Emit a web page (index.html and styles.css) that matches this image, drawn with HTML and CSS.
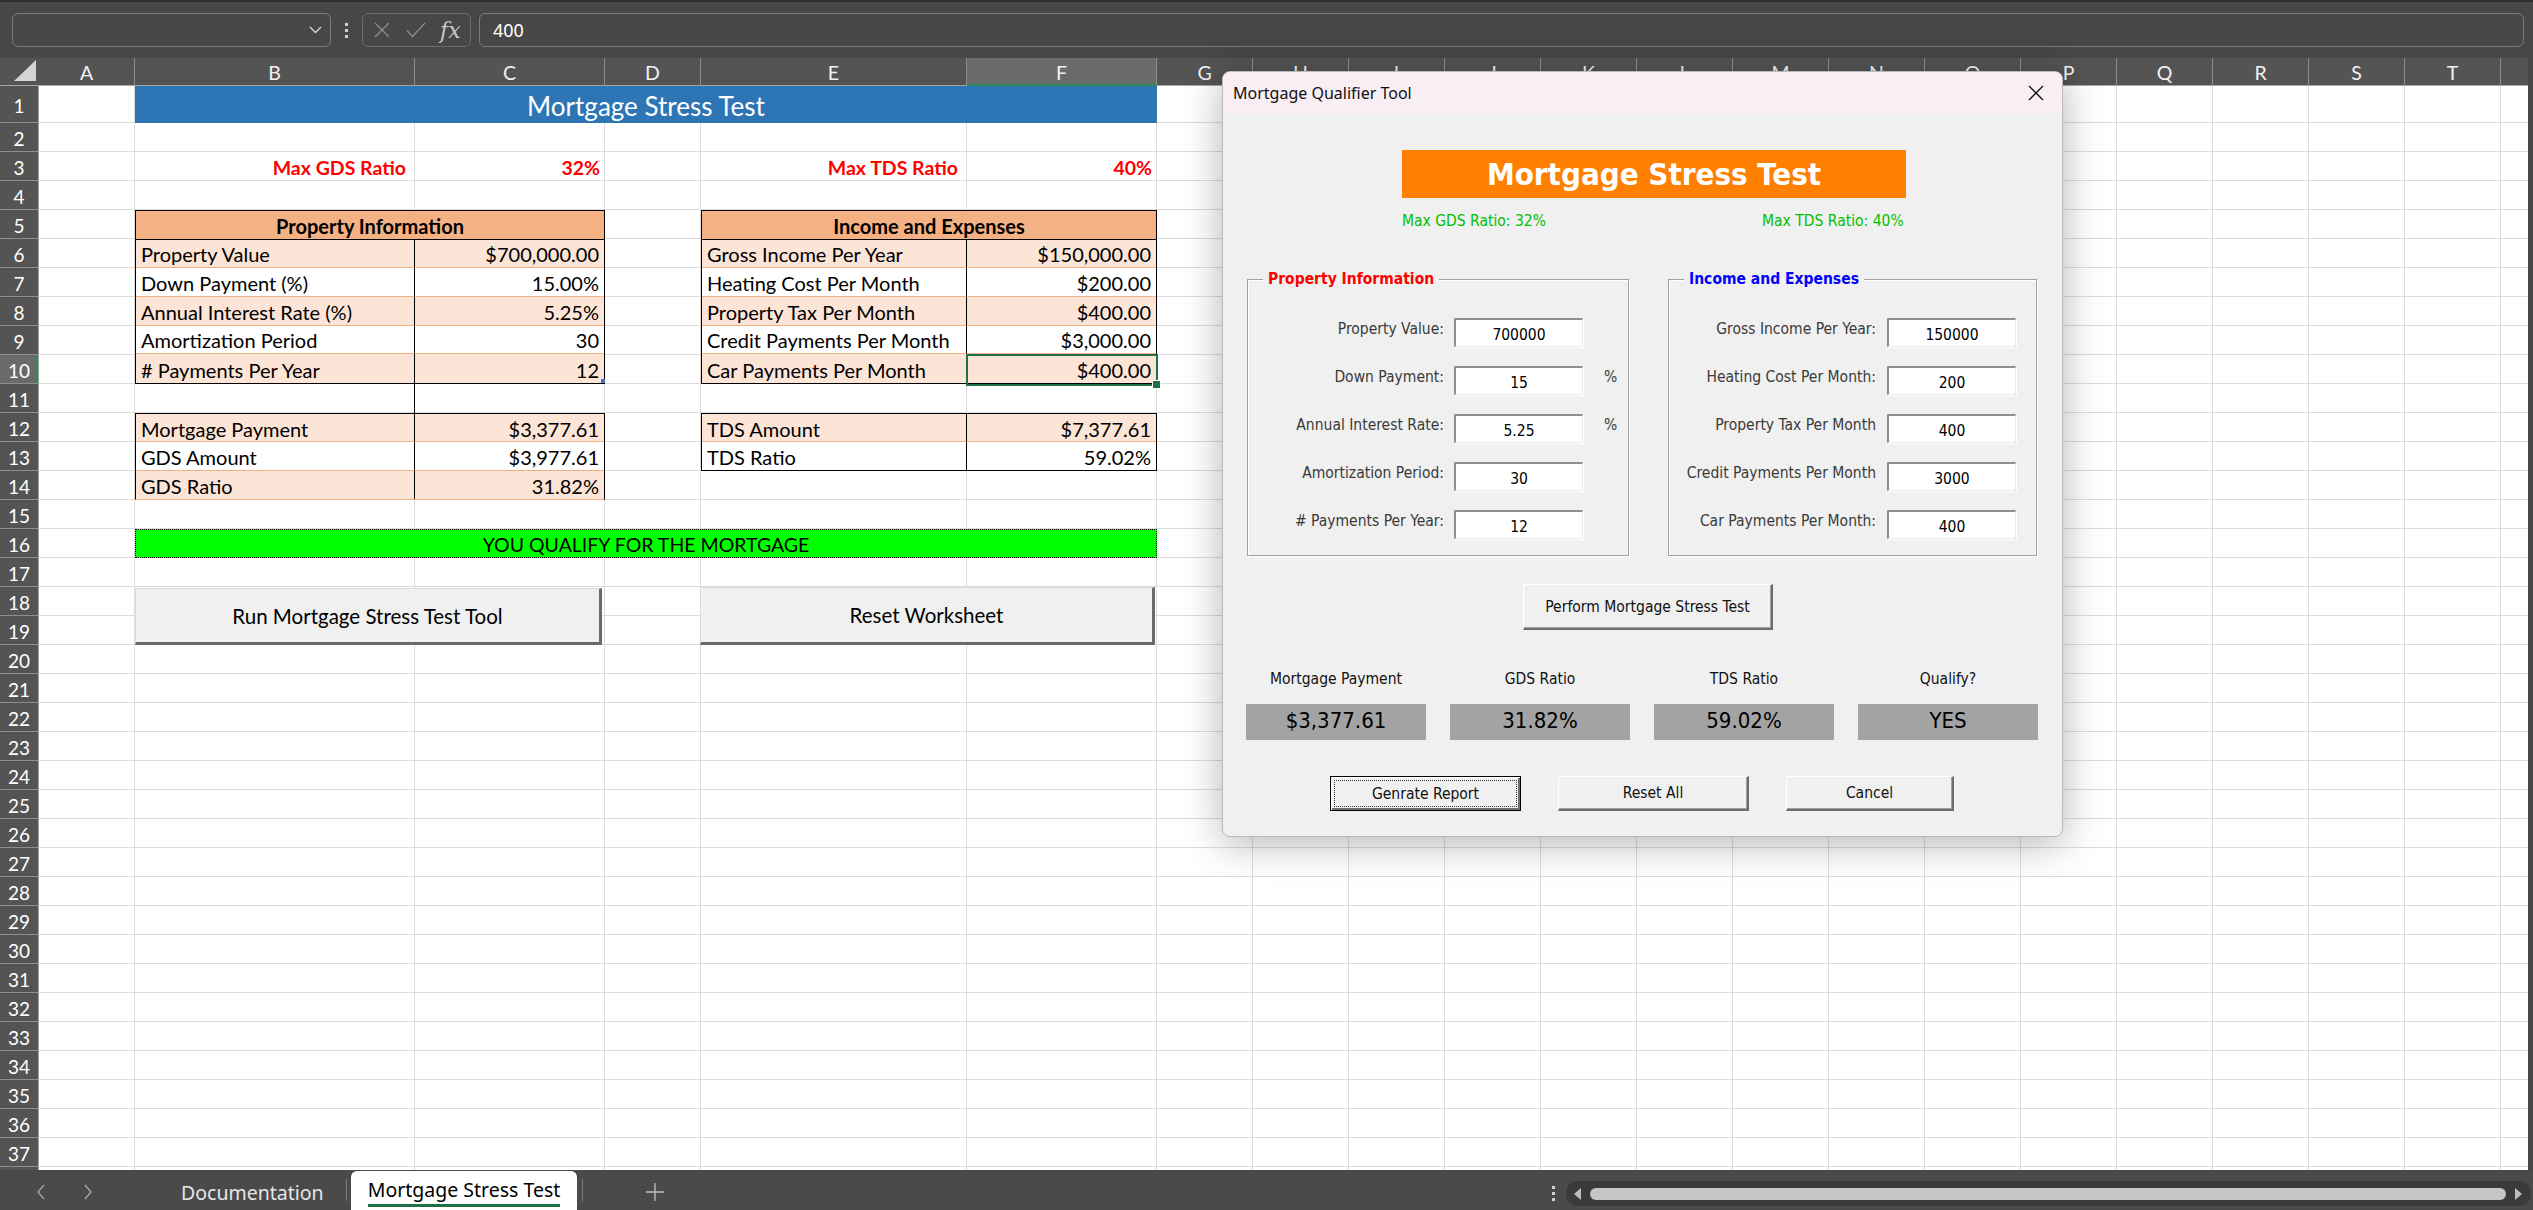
FILE: index.html
```html
<!DOCTYPE html>
<html>
<head>
<meta charset="utf-8">
<title>Mortgage Stress Test</title>
<link rel="stylesheet" href="styles.css">
</head>
<body>
<div class="app">
  <div class="fbar">
    <div class="namebox"><svg width="13" height="8" viewBox="0 0 13 8"><polyline points="1,1 6.5,6.5 12,1" fill="none" stroke="#d6d6d6" stroke-width="1.4"/></svg></div>
    <div class="grip"><i></i><i></i><i></i></div>
    <div class="fxbox">
      <svg class="ic-x" width="16" height="16" viewBox="0 0 16 16"><path d="M1 1 L15 15 M15 1 L1 15" stroke="#8d8d8d" stroke-width="1.3" fill="none"/></svg>
      <svg class="ic-ok" width="20" height="16" viewBox="0 0 20 16"><path d="M1 8.5 L6.5 14.5 L19 1" stroke="#8d8d8d" stroke-width="1.3" fill="none"/></svg>
      <span class="fx">fx</span>
    </div>
    <div class="finput">400</div>
  </div>

  <div class="sheet">
    <div class="corner"><svg width="22" height="21" viewBox="0 0 22 21"><polygon points="0,21 22,21 22,0" fill="#d4d4d4"/></svg></div>
    <div class="ch">A</div><div class="ch">B</div><div class="ch">C</div><div class="ch">D</div><div class="ch">E</div><div class="ch hsel">F</div><div class="ch">G</div><div class="ch">H</div><div class="ch">I</div><div class="ch">J</div><div class="ch">K</div><div class="ch">L</div><div class="ch">M</div><div class="ch">N</div><div class="ch">O</div><div class="ch">P</div><div class="ch">Q</div><div class="ch">R</div><div class="ch">S</div><div class="ch">T</div><div class="ch last"></div>

    <div class="rowhdr">
      <div class="rh">1</div><div class="rh">2</div><div class="rh">3</div><div class="rh">4</div><div class="rh">5</div><div class="rh">6</div><div class="rh">7</div><div class="rh">8</div><div class="rh">9</div><div class="rh rsel">10</div>
      <div class="rh">11</div><div class="rh">12</div><div class="rh">13</div><div class="rh">14</div><div class="rh">15</div><div class="rh">16</div><div class="rh">17</div><div class="rh">18</div><div class="rh">19</div><div class="rh">20</div>
      <div class="rh">21</div><div class="rh">22</div><div class="rh">23</div><div class="rh">24</div><div class="rh">25</div><div class="rh">26</div><div class="rh">27</div><div class="rh">28</div><div class="rh">29</div><div class="rh">30</div>
      <div class="rh">31</div><div class="rh">32</div><div class="rh">33</div><div class="rh">34</div><div class="rh">35</div><div class="rh">36</div><div class="rh">37</div><div class="rh"></div>
    </div>

    <div class="cells"></div>

    <div class="title">Mortgage Stress Test</div>

    <div class="lim limB">Max GDS Ratio</div>
    <div class="lim limC">32%</div>
    <div class="lim limE">Max TDS Ratio</div>
    <div class="lim limF">40%</div>

    <div class="tbl tblB prop">
      <div class="tc hdr">Property Information</div>
      <div class="tc k fill">Property Value</div><div class="tc v fill">$700,000.00</div>
      <div class="tc k">Down Payment (%)</div><div class="tc v">15.00%</div>
      <div class="tc k fill">Annual Interest Rate (%)</div><div class="tc v fill">5.25%</div>
      <div class="tc k">Amortization Period</div><div class="tc v">30</div>
      <div class="tc k fill last">&#35; Payments Per Year</div><div class="tc v fill last mark">12</div>
    </div>

    <div class="tbl tblE inc">
      <div class="tc hdr">Income and Expenses</div>
      <div class="tc k fill">Gross Income Per Year</div><div class="tc v fill">$150,000.00</div>
      <div class="tc k">Heating Cost Per Month</div><div class="tc v">$200.00</div>
      <div class="tc k fill">Property Tax Per Month</div><div class="tc v fill">$400.00</div>
      <div class="tc k">Credit Payments Per Month</div><div class="tc v">$3,000.00</div>
      <div class="tc k fill last">Car Payments Per Month</div><div class="tc v fill last">$400.00</div>
    </div>

    <div class="divider11"></div>

    <div class="tbl tblB res">
      <div class="tc k fill">Mortgage Payment</div><div class="tc v fill">$3,377.61</div>
      <div class="tc k">GDS Amount</div><div class="tc v">$3,977.61</div>
      <div class="tc k fill last">GDS Ratio</div><div class="tc v fill last">31.82%</div>
    </div>

    <div class="tbl tblE tds">
      <div class="tc k fill">TDS Amount</div><div class="tc v fill">$7,377.61</div>
      <div class="tc k last">TDS Ratio</div><div class="tc v last">59.02%</div>
    </div>

    <div class="selcell"></div>

    <div class="qualify">YOU QUALIFY FOR THE MORTGAGE</div>

    <div class="xbtn runbtn">Run Mortgage Stress Test Tool</div>
    <div class="xbtn resetbtn">Reset Worksheet</div>
  </div>

  <div class="tabbar">
    <div class="tabnav">
      <svg width="10" height="16" viewBox="0 0 10 16"><polyline points="8,1 2,8 8,15" fill="none" stroke="#a8a8a8" stroke-width="1.3"/></svg>
      <svg width="10" height="16" viewBox="0 0 10 16"><polyline points="2,1 8,8 2,15" fill="none" stroke="#a8a8a8" stroke-width="1.3"/></svg>
    </div>
    <div class="tab doc">Documentation</div>
    <div class="tsep"></div>
    <div class="tab active"><span>Mortgage Stress Test</span></div>
    <div class="tsep"></div>
    <div class="plus"><svg width="18" height="18" viewBox="0 0 18 18"><path d="M9 0 V18 M0 9 H18" stroke="#bdbdbd" stroke-width="1.4"/></svg></div>
    <div class="tspacer"></div>
    <div class="vgrip"><i></i><i></i><i></i></div>
    <div class="hscroll">
      <svg class="arr" width="8" height="12" viewBox="0 0 8 12"><polygon points="7,0 7,12 0,6" fill="#bdbdbd"/></svg>
      <div class="thumb"></div>
      <svg class="arr" width="8" height="12" viewBox="0 0 8 12"><polygon points="1,0 1,12 8,6" fill="#bdbdbd"/></svg>
    </div>
  </div>
</div>

<div class="dialog">
  <div class="dlg-title">
    <span>Mortgage Qualifier Tool</span>
    <svg class="close" width="16" height="16" viewBox="0 0 16 16"><path d="M1 1 L15 15 M15 1 L1 15" stroke="#111" stroke-width="1.3" fill="none"/></svg>
  </div>
  <div class="dlg-body">
    <div class="banner">Mortgage Stress Test</div>
    <div class="limits"><span>Max GDS Ratio: 32%</span><span>Max TDS Ratio: 40%</span></div>

    <div class="frames">
      <div class="frame fprop">
        <div class="ftitle red">Property Information</div>
        <div class="frow"><span class="flbl">Property Value:</span><span class="tb">700000</span><span class="unit"></span></div>
        <div class="frow"><span class="flbl">Down Payment:</span><span class="tb">15</span><span class="unit">%</span></div>
        <div class="frow"><span class="flbl">Annual Interest Rate:</span><span class="tb">5.25</span><span class="unit">%</span></div>
        <div class="frow"><span class="flbl">Amortization Period:</span><span class="tb">30</span><span class="unit"></span></div>
        <div class="frow"><span class="flbl">&#35; Payments Per Year:</span><span class="tb">12</span><span class="unit"></span></div>
      </div>
      <div class="frame finc">
        <div class="ftitle blue">Income and Expenses</div>
        <div class="frow"><span class="flbl">Gross Income Per Year:</span><span class="tb">150000</span></div>
        <div class="frow"><span class="flbl">Heating Cost Per Month:</span><span class="tb">200</span></div>
        <div class="frow"><span class="flbl">Property Tax Per Month</span><span class="tb">400</span></div>
        <div class="frow"><span class="flbl">Credit Payments Per Month</span><span class="tb">3000</span></div>
        <div class="frow"><span class="flbl">Car Payments Per Month:</span><span class="tb">400</span></div>
      </div>
    </div>

    <div class="dbtn perform">Perform Mortgage Stress Test</div>

    <div class="results">
      <div class="rl">Mortgage Payment</div>
      <div class="rl">GDS Ratio</div>
      <div class="rl">TDS Ratio</div>
      <div class="rl">Qualify?</div>
      <div class="rv">$3,377.61</div>
      <div class="rv">31.82%</div>
      <div class="rv">59.02%</div>
      <div class="rv">YES</div>
    </div>

    <div class="actions">
      <div class="dbtn def"><span>Genrate Report</span></div>
      <div class="dbtn reset">Reset All</div>
      <div class="dbtn cancel">Cancel</div>
    </div>
  </div>
</div>
</body>
</html>
```

FILE: styles.css
```css
* { box-sizing: border-box; }
html, body { margin: 0; padding: 0; }
body {
  width: 2533px;
  height: 1210px;
  overflow: hidden;
  background: #474747;
  position: relative;
  font-family: Lato, "Liberation Sans", sans-serif;
}
.app { display: flex; flex-direction: column; height: 1210px; }

/* ---------- formula bar ---------- */
.fbar {
  flex: none;
  height: 58px;
  border-top: 2px solid #2d2d2d;
  display: flex;
  align-items: flex-start;
  padding: 11px 9px 0 12px;
}
.namebox {
  width: 319px; height: 34px;
  border: 1px solid #7b7b7b; border-radius: 6px;
  display: flex; align-items: center; justify-content: flex-end;
  padding-right: 8px;
}
.grip { width: 31px; height: 34px; display: flex; flex-direction: column; align-items: center; justify-content: center; gap: 3px; }
.grip i { display: block; width: 3px; height: 3px; background: #d0d0d0; }
.fxbox {
  width: 109px; height: 34px;
  border: 1px solid #6c6c6c; border-radius: 6px;
  display: flex; align-items: center;
}
.ic-x { margin-left: 11px; }
.ic-ok { margin-left: 16px; }
.fx { margin-left: 14px; color: #c8c8c8; font: italic 22px "DejaVu Serif", "Liberation Serif", serif; }
.finput {
  flex: 1; margin-left: 8px; height: 34px;
  border: 1px solid #7b7b7b; border-radius: 6px;
  color: #fff; font: 18px "Noto Sans", sans-serif;
  display: flex; align-items: center; padding-left: 13px;
}

/* ---------- sheet ---------- */
.sheet {
  flex: none;
  width: 2528px; height: 1112px;
  display: grid;
  grid-template-columns: 39px 96px 280px 190px 96px 266px 190px 96px repeat(13, 96px) 1fr;
  grid-template-rows: 28px 37px repeat(36, 29px) 1fr;
  background: #545454;
  font-size: 19.5px;
}
.corner { background: #545454; display: flex; align-items: flex-end; justify-content: flex-end; padding: 0 3px 4px 0; border-bottom: 1px solid #a6a6a6; }
.corner svg { display: block; }
.ch {
  background: #545454; color: #f2f2f2;
  display: flex; align-items: center; justify-content: center;
  padding-top: 2px;
  border-right: 1px solid #8e8e8e; border-bottom: 1px solid #a6a6a6;
}
.ch.last { border-right: 0; }
.ch.hsel { background: #6a6a6a; border-bottom: 2px solid #2f8a53; }

.rowhdr {
  grid-column: 1; grid-row: 2 / -1;
  display: grid;
  grid-template-rows: 37px repeat(36, 29px) 1fr;
  background: #545454;
  border-right: 1px solid #a0a0a0;
  font-size: 19px;
}
.rh {
  display: flex; align-items: center; justify-content: center;
  color: #fff; padding-top: 3px;
  border-bottom: 1px solid #8e8e8e;
}
.rh.rsel { background: #6a6a6a; box-shadow: inset -2px 0 0 #2f8a53; }

.cells {
  grid-column: 2 / -1; grid-row: 2 / -1;
  background:
    linear-gradient(#dcdcdc, #dcdcdc) 95px 0 / 1px 100% no-repeat,
    linear-gradient(#dcdcdc, #dcdcdc) 375px 0 / 1px 100% no-repeat,
    linear-gradient(#dcdcdc, #dcdcdc) 565px 0 / 1px 100% no-repeat,
    linear-gradient(#dcdcdc, #dcdcdc) 661px 0 / 1px 100% no-repeat,
    linear-gradient(#dcdcdc, #dcdcdc) 927px 0 / 1px 100% no-repeat,
    linear-gradient(#dcdcdc, #dcdcdc) 1117px 0 / 1px 100% no-repeat,
    repeating-linear-gradient(to right, transparent 0 95px, #dcdcdc 95px 96px) 1118px 0 / calc(100% - 1118px) 100% no-repeat,
    linear-gradient(#dcdcdc, #dcdcdc) 0 36px / 100% 1px no-repeat,
    repeating-linear-gradient(to bottom, transparent 0 28px, #dcdcdc 28px 29px) 0 37px / 100% calc(100% - 37px) no-repeat,
    #fff;
}

.title {
  grid-column: 3 / 8; grid-row: 2;
  background: #2e75b6; color: #fff;
  font-size: 26px;
  display: flex; align-items: center; justify-content: center;
  padding-top: 2px;
}

.lim {
  grid-row: 4;
  color: #ff0000; font-weight: bold;
  display: flex; align-items: center; justify-content: flex-end;
  padding: 2px 6px 0 0;
}
.limB { grid-column: 3; padding-right: 9px; }
.limC { grid-column: 4; padding-right: 5px; }
.limE { grid-column: 6; padding-right: 9px; }
.limF { grid-column: 7; padding-right: 5px; }

.tbl {
  display: grid;
  grid-auto-rows: 1fr;
  border: 1px solid #000;
  background: #fff;
  color: #000;
  font-size: 20px;
}
.tblB { grid-column: 3 / 5; grid-template-columns: 279px 1fr; }
.tblE { grid-column: 6 / 8; grid-template-columns: 265px 1fr; }
.prop, .inc { grid-row: 6 / 12; }
.res { grid-row: 13 / 16; border-bottom-color: #f4b183; }
.tds { grid-row: 13 / 15; }

.tc {
  display: flex; align-items: center;
  padding: 2px 5px 0 5px;
  border-bottom: 1px solid #f4b183;
  white-space: nowrap;
}
.tc.k { border-right: 1px solid #000; }
.tc.v { justify-content: flex-end; }
.tc.fill { background: #fce4d6; }
.tc.last { border-bottom: 0; }
.tc.hdr {
  grid-column: 1 / -1;
  justify-content: center;
  background: #f4b183; font-weight: bold;
  border-bottom: 1px solid #000;
}
.tc.mark { position: relative; }
.tc.mark::after {
  content: ""; position: absolute; right: -1px; bottom: 0;
  width: 4px; height: 4px; background: #4472c4;
}

.divider11 { grid-column: 3; grid-row: 12; border-right: 1px solid #000; }

.selcell {
  grid-column: 7; grid-row: 11;
  margin: -1px -1px -2px -1px;
  border: 2px solid #1e7145;
  position: relative;
}
.selcell::after {
  content: ""; position: absolute; right: -5px; bottom: -5px;
  width: 7px; height: 7px; background: #1e7145; border: 1px solid #fff;
}

.qualify {
  grid-column: 3 / 8; grid-row: 17;
  background: #00ff00;
  border: 1px dotted #000;
  display: flex; align-items: center; justify-content: center;
  padding-top: 2px;
}

.xbtn {
  grid-row: 19 / 21;
  background: #f0f0f0;
  border-top: 1px solid #dcdcdc; border-left: 1px solid #dcdcdc;
  border-right: 3px solid #6a6a6a; border-bottom: 3px solid #6a6a6a;
  display: flex; align-items: center; justify-content: center;
  color: #000;
  font-size: 20.5px;
}
.runbtn { grid-column: 3 / 5; margin: 1px 3px 0 0; }
.resetbtn { grid-column: 6 / 8; margin: 0 2px 0 -1px; }

/* ---------- tab bar ---------- */
.tabbar {
  flex: 1;
  display: flex; align-items: stretch;
  background: #4a4a4a;
  font-family: "Noto Sans", sans-serif;
  font-size: 19.5px;
}
.tabnav { width: 130px; display: flex; align-items: center; padding-left: 36px; gap: 37px; padding-top: 4px; }
.tab { display: flex; align-items: center; padding-top: 5px; }
.tab.doc { width: 216px; padding-left: 51px; color: #e6e6e6; }
.tsep { width: 1px; margin: 9px 0 9px 0; background: #7a7a7a; }
.tab.active {
  margin: 1px 5px 0 4px; width: 226px;
  background: #fff; color: #000;
  border-radius: 6px 6px 0 0;
  justify-content: center; padding-top: 2px;
}
.tab.active span { border-bottom: 3px solid #1e7145; line-height: 28px; }
.plus { width: 143px; display: flex; align-items: center; justify-content: center; padding-top: 4px; }
.tspacer { flex: 1; }
.vgrip { width: 25px; display: flex; flex-direction: column; align-items: center; justify-content: center; gap: 3px; padding-top: 6px; }
.vgrip i { display: block; width: 3px; height: 3px; background: #d0d0d0; }
.hscroll {
  width: 965px; margin: 11px 2px 4px 0;
  background: #3a3a3a; border-radius: 12px;
  display: flex; align-items: center; padding: 0 9px 0 8px; gap: 8px;
}
.thumb { flex: 1; height: 12px; background: #c5c5c5; border-radius: 6px; }

/* ---------- dialog ---------- */
.dialog {
  position: absolute; left: 1222px; top: 71px;
  width: 841px; height: 766px;
  background: #f0f0f0;
  border: 1px solid #b9b9b9;
  border-radius: 8px;
  box-shadow: 0 6px 40px rgba(0,0,0,0.30);
  overflow: hidden;
  font-family: "DejaVu Sans Condensed", "DejaVu Sans", sans-serif;
  font-stretch: condensed;
  font-size: 15.5px;
  color: #000;
}
.dlg-title {
  height: 42px;
  background: #f8eef3;
  display: flex; align-items: center; justify-content: space-between;
  padding: 0 18px 0 10px;
  font-family: "Noto Sans", sans-serif; font-stretch: normal;
  font-size: 16px; color: #111;
}
.banner {
  margin: 36px 0 0 179px; width: 504px; height: 48px;
  background: #ff8000; color: #fff;
  font-size: 31px; font-weight: bold;
  display: flex; align-items: center; justify-content: center;
}
.limits {
  margin: 14px 0 0 179px;
  display: grid; grid-template-columns: 360px auto;
  color: #00c000; line-height: 18px;
}
.frames { margin: 49px 0 0 24px; display: flex; gap: 39px; }
.frame {
  position: relative;
  height: 277px;
  border: 1px solid #a0a0a0;
  box-shadow: 1px 1px 0 #fff, inset 1px 1px 0 #fff;
  padding: 38px 0 0 0;
  display: flex; flex-direction: column; gap: 19px;
}
.fprop { width: 382px; }
.finc { width: 369px; }
.ftitle {
  position: absolute; top: -10px; left: 15px;
  padding: 0 5px; background: #f0f0f0;
  font-weight: bold; line-height: 18px;
}
.red { color: #ff0000; }
.blue { color: #0000ff; }
.frow { display: grid; align-items: start; height: 29px; column-gap: 10px; }
.fprop .frow { grid-template-columns: 196px 129px auto; }
.finc .frow { grid-template-columns: 207px 129px; column-gap: 11px; }
.flbl { text-align: right; color: #3a3a3a; white-space: nowrap; padding-top: 2px; }
.unit { padding: 2px 0 0 11px; color: #3a3a3a; }
.tb {
  height: 29px; background: #fff;
  border-top: 2px solid #8f8f8f; border-left: 2px solid #8f8f8f;
  border-right: 1px solid #e8e8e8; border-bottom: 1px solid #e8e8e8;
  box-shadow: 1px 1px 0 #fff;
  display: flex; align-items: center; justify-content: center;
  padding-top: 3px;
}
.dbtn {
  background: #f0f0f0;
  border-top: 1px solid #fff; border-left: 1px solid #fff;
  border-right: 2px solid #6d6d6d; border-bottom: 2px solid #6d6d6d;
  box-shadow: inset -1px -1px 0 #a0a0a0;
  display: flex; align-items: center; justify-content: center;
  color: #111;
}
.perform { margin: 28px 0 0 300px; width: 250px; height: 46px; }
.results {
  margin: 40px 0 0 23px;
  display: grid; grid-template-columns: repeat(4, 180px);
  column-gap: 24px; row-gap: 16px;
}
.rl { text-align: center; line-height: 18px; color: #111; }
.rv {
  height: 36px; background: #a3a3a3;
  display: flex; align-items: center; justify-content: center;
  font-size: 22px; padding-bottom: 3px;
}
.actions { margin: 36px 0 0 107px; display: flex; gap: 37px; }
.actions .dbtn { height: 35px; }
.def { width: 191px; border: 1px solid #000; box-shadow: inset 1px 1px 0 #fff, inset -2px -2px 0 #6d6d6d; padding: 3px; }
.def span { flex: 1; height: 100%; display: flex; align-items: center; justify-content: center; border: 1px dotted #333; }
.reset { width: 191px; }
.cancel { width: 168px; }
```
